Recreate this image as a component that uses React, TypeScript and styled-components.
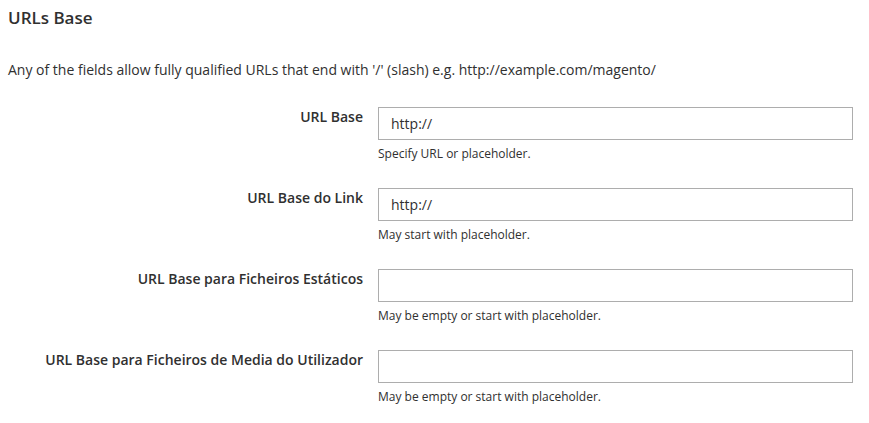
import styled, { createGlobalStyle } from "styled-components";

const GlobalStyle = createGlobalStyle`
    body {
        margin: 0;
        background: #fff;
        font-family: "Open Sans", "Liberation Sans", sans-serif;
        color: #303030;
    }
`;

const fields = [
    { label: "URL Base", value: "http://", note: "Specify URL or placeholder." },
    { label: "URL Base do Link", value: "http://", note: "May start with placeholder." },
    { label: "URL Base para Ficheiros Estáticos", value: "", note: "May be empty or start with placeholder." },
    { label: "URL Base para Ficheiros de Media do Utilizador", value: "", note: "May be empty or start with placeholder." },
];

function App() {
    return (
        <>
            <GlobalStyle />
            <Section>
                <Title>URLs Base</Title>
                <Intro>
                    Any of the fields allow fully qualified URLs that end with '/' (slash) e.g.
                    http://example.com/magento/
                </Intro>
                <Fields>
                    {fields.map((f) => (
                        <Row key={f.label}>
                            <Label>{f.label}</Label>
                            <Control>
                                <Input type="text" defaultValue={f.value} />
                                <Note>{f.note}</Note>
                            </Control>
                        </Row>
                    ))}
                </Fields>
            </Section>
        </>
    );
}

const Section = styled.div`
    padding: 6px 16px 0 8px;
`;

const Title = styled.div`
    font-size: 17px;
    font-weight: 600;
    color: #303030;
    line-height: 24px;
`;

const Intro = styled.div`
    margin-top: 30px;
    font-size: 14px;
    line-height: 20px;
`;

const Fields = styled.div`
    display: flex;
    flex-direction: column;
    gap: 25px;
    margin-top: 27px;
`;

const Row = styled.div`
    display: grid;
    grid-template-columns: 355px 475px;
    column-gap: 15px;
`;

const Label = styled.label`
    text-align: right;
    font-size: 14px;
    font-weight: 600;
    line-height: 20px;
`;

const Control = styled.div`
    display: flex;
    flex-direction: column;
`;

const Input = styled.input`
    box-sizing: border-box;
    height: 33px;
    width: 100%;
    border: 1px solid #adadad;
    border-radius: 0;
    padding: 0 12px;
    font-family: "Open Sans", "Liberation Sans", sans-serif;
    font-size: 14px;
    color: #303030;
    outline: none;
`;

const Note = styled.div`
    margin-top: 5px;
    font-size: 12px;
    line-height: 18px;
    color: #303030;
`;

export default App;
